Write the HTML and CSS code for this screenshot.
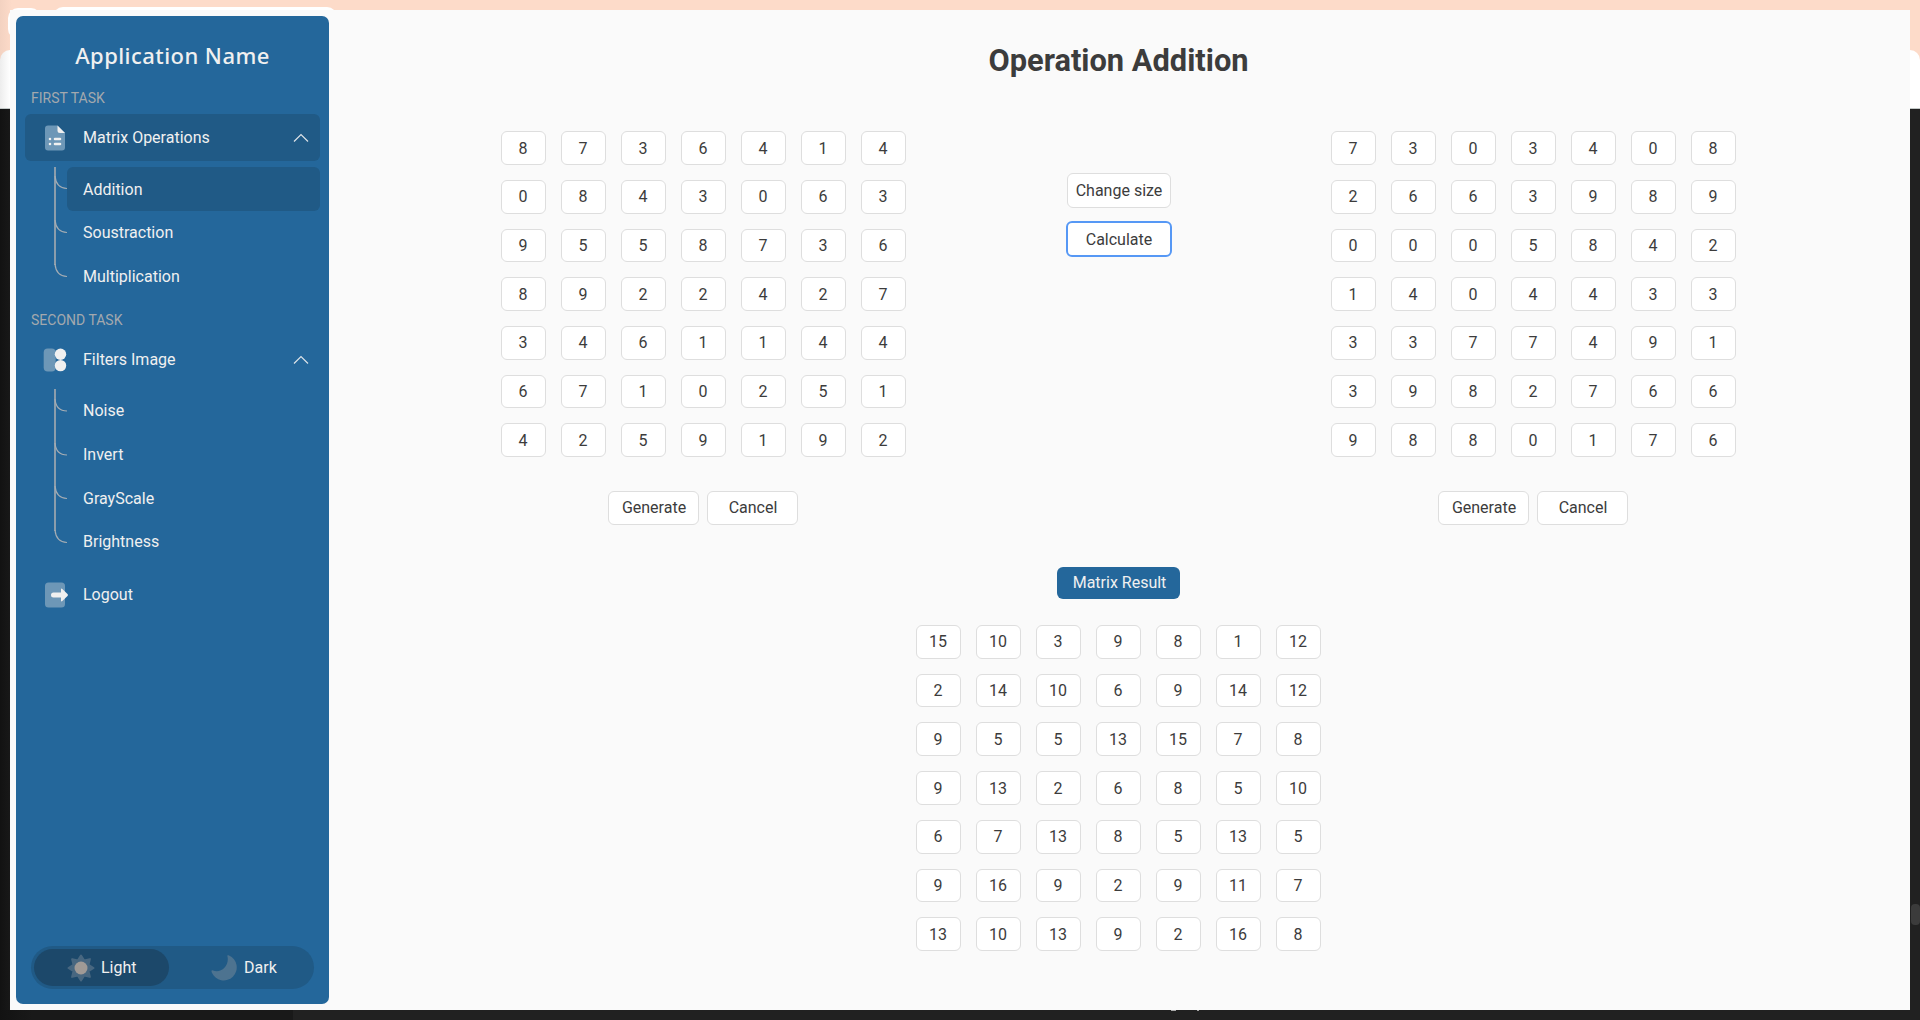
FILE: index.html
```html
<!DOCTYPE html>
<html lang="en">
<head>
<meta charset="utf-8">
<title>Operation Addition</title>
<link rel="stylesheet" href="styles.css">
</head>
<body>
<div class="desktop">
  <i class="piece page"></i>
  <i class="piece dark"></i>
  <i class="piece taskbar"></i>
  <i class="piece tab-icon"></i>
  <i class="piece tab"></i>
  <i class="piece scroll"></i>
  <i class="piece speck"></i>
  <i class="piece speck small"></i>
</div>
<div class="window">
  <aside class="sidebar">
    <div class="brand">Application Name</div>
    <div class="label">FIRST TASK</div>
    <div class="item active">
      <svg class="icon" viewBox="0 0 26 26"><path class="soft" d="M5 0.500h9.500l7.500 7.500v14.500a3 3 0 0 1-3 3H5a3 3 0 0 1-3-3v-19a3 3 0 0 1 3-3z"/><path class="solid" d="M14.500 .5l7.500 7.500h-5a2.500 2.500 0 0 1-2.500-2.500z"/><path class="dash" d="M7 14h.01M7 19h.01M12 14h5M12 19h5"/></svg>
      <span>Matrix Operations</span>
      <svg class="chevron" viewBox="0 0 16 10"><path d="M1 8.500l7-7 7 7"/></svg>
    </div>
    <div class="submenu">
      <svg class="tree" viewBox="0 0 13 132" height="132"><path class="trunk" d="M1 0v98"/><path d="M1 9Q2 21 13 21.500M1 53Q2 65 13 65.500M1 97Q2 109 13 109.500"/></svg>
      <div class="links"><a class="active">Addition</a><a>Soustraction</a><a>Multiplication</a></div>
    </div>
    <div class="label second">SECOND TASK</div>
    <div class="item">
      <svg class="icon" viewBox="0 0 26 26"><rect class="soft" x="0.7" y="1.500" width="12" height="23" rx="4"/><circle class="solid" cx="17.500" cy="7.200" r="5.700"/><circle class="solid" cx="17.500" cy="18.600" r="5.700"/></svg>
      <span>Filters Image</span>
      <svg class="chevron" viewBox="0 0 16 10"><path d="M1 8.500l7-7 7 7"/></svg>
    </div>
    <div class="submenu">
      <svg class="tree" viewBox="0 0 13 176" height="176"><path class="trunk" d="M1 0v142"/><path d="M1 10Q2 22 13 22M1 54Q2 66 13 66M1 97Q2 109 13 109.500M1 141Q2 153 13 153.500"/></svg>
      <div class="links"><a>Noise</a><a>Invert</a><a>GrayScale</a><a>Brightness</a></div>
    </div>
    <div class="item logout">
      <svg class="icon" viewBox="0 0 26 26"><rect class="soft" x="2" y="0.500" width="20" height="25" rx="3.500"/><path class="solid" d="M10.500 10.500H18V7.500q0-1.500 1.300-.5l5.200 5q1 1 0 2l-5.200 5q-1.300 1-1.300-.5v-3h-7.500a2.500 2.500 0 0 1 0-5z"/></svg>
      <span>Logout</span>
    </div>
    <div class="theme">
      <div class="mode on"><svg class="sun" viewBox="0 0 30 30"><path d="M15 2.500l3.200 5 5.700-1.400-1.400 5.700 5 3.200-5 3.200 1.400 5.700-5.700-1.400-3.200 5-3.200-5-5.700 1.400 1.400-5.700-5-3.200 5-3.200-1.400-5.700 5.700 1.400z"/><circle cx="15" cy="15" r="6.500"/></svg><span>Light</span></div>
      <div class="mode"><svg class="moon" viewBox="0 0 26 26"><path d="M16.500 1.500C15.500 .4 17 0 18 .5A13 13 0 1 1 .8 17.500C0 15.500 .8 14.800 2 15.500C10 18.500 18.500 11 16.500 1.500Z"/></svg><span>Dark</span></div>
    </div>
  </aside>
  <main class="main">
    <h1>Operation Addition</h1>
    <div class="operands">
      <section class="operand">
        <div class="matrix">
          <b>8</b><b>7</b><b>3</b><b>6</b><b>4</b><b>1</b><b>4</b>
          <b>0</b><b>8</b><b>4</b><b>3</b><b>0</b><b>6</b><b>3</b>
          <b>9</b><b>5</b><b>5</b><b>8</b><b>7</b><b>3</b><b>6</b>
          <b>8</b><b>9</b><b>2</b><b>2</b><b>4</b><b>2</b><b>7</b>
          <b>3</b><b>4</b><b>6</b><b>1</b><b>1</b><b>4</b><b>4</b>
          <b>6</b><b>7</b><b>1</b><b>0</b><b>2</b><b>5</b><b>1</b>
          <b>4</b><b>2</b><b>5</b><b>9</b><b>1</b><b>9</b><b>2</b>
        </div>
        <div class="buttons"><button>Generate</button><button>Cancel</button></div>
      </section>
      <section class="actions"><button>Change size</button><button class="focused">Calculate</button></section>
      <section class="operand">
        <div class="matrix">
          <b>7</b><b>3</b><b>0</b><b>3</b><b>4</b><b>0</b><b>8</b>
          <b>2</b><b>6</b><b>6</b><b>3</b><b>9</b><b>8</b><b>9</b>
          <b>0</b><b>0</b><b>0</b><b>5</b><b>8</b><b>4</b><b>2</b>
          <b>1</b><b>4</b><b>0</b><b>4</b><b>4</b><b>3</b><b>3</b>
          <b>3</b><b>3</b><b>7</b><b>7</b><b>4</b><b>9</b><b>1</b>
          <b>3</b><b>9</b><b>8</b><b>2</b><b>7</b><b>6</b><b>6</b>
          <b>9</b><b>8</b><b>8</b><b>0</b><b>1</b><b>7</b><b>6</b>
        </div>
        <div class="buttons"><button>Generate</button><button>Cancel</button></div>
      </section>
    </div>
    <section class="result">
      <div class="result-title">Matrix Result</div>
      <div class="matrix">
        <b>15</b><b>10</b><b>3</b><b>9</b><b>8</b><b>1</b><b>12</b>
        <b>2</b><b>14</b><b>10</b><b>6</b><b>9</b><b>14</b><b>12</b>
        <b>9</b><b>5</b><b>5</b><b>13</b><b>15</b><b>7</b><b>8</b>
        <b>9</b><b>13</b><b>2</b><b>6</b><b>8</b><b>5</b><b>10</b>
        <b>6</b><b>7</b><b>13</b><b>8</b><b>5</b><b>13</b><b>5</b>
        <b>9</b><b>16</b><b>9</b><b>2</b><b>9</b><b>11</b><b>7</b>
        <b>13</b><b>10</b><b>13</b><b>9</b><b>2</b><b>16</b><b>8</b>
      </div>
    </section>
  </main>
</div>
</body>
</html>
```
FILE: styles.css
```css
* { box-sizing: border-box; }
body {
  margin: 0;
  padding: 10px;
  height: 1020px;
  overflow: hidden;
  background: #fddbc9;
  font-family: Roboto, "Liberation Sans", sans-serif;
  font-size: 16px;
  color: #3c3c3c;
}

/* Desktop showing round the window */
.desktop { position: absolute; inset: 0; overflow: hidden; background: linear-gradient(90deg, #f3d2c1, #fddbc9 12px); }
.piece { position: absolute; }
.page { left: 0; right: 0; top: 50px; height: 59px; background: linear-gradient(90deg, #ededed, #fff 10px); border-radius: 10px 10px 0 0; border-bottom: 1px solid #c3c9c8; }
.dark { left: 0; right: 0; top: 109px; bottom: 0; background: linear-gradient(90deg, #121212, #181818 10px, #212121 11px); }
.taskbar { left: 0; top: 1010px; width: 293px; height: 10px; background: linear-gradient(90deg, #121212, #191919 32px); }
.tab-icon { left: 8px; top: 8px; width: 33px; height: 31px; border-radius: 10px; background: #fff; }
.tab { left: 53px; top: 7px; width: 284px; height: 30px; border-radius: 10px; background: #fff; }
.scroll { left: 1911px; top: 904px; width: 9px; height: 21px; border-radius: 4px; background: #3b3b3b; }
.speck { left: 1171px; top: 1010px; width: 5px; height: 1px; background: #aaa; }
.speck.small { left: 1197px; width: 2px; }

.window { position: relative; display: flex; height: 1000px; padding: 6px 0 6px 6px; background: #fafafa; }

.sidebar { display: flex; flex-direction: column; width: 313px; padding: 0 9px 15px; background: #24679b; border-radius: 7px; color: #f0f0f0; }
.brand { height: 71px; padding-top: 23px; font: 500 22px/32px "Noto Sans", sans-serif; letter-spacing: .45px; text-align: center; }
.label { height: 27px; padding: 2px 0 0 6px; font-size: 14px; line-height: 18px; color: #a3a9ae; }
.label.second { height: 37px; padding-top: 12px; }
.item { display: flex; align-items: center; flex: none; height: 47px; padding: 0 11px 0 18px; border-radius: 6px; line-height: 20px; }
.item.active, .links .active { background: #205a86; }
.icon { width: 26px; height: 26px; margin-right: 14px; }
.soft { fill: #6d97b7; }
.solid { fill: #f0f0f0; }
.dash { fill: none; stroke: #f0f0f0; stroke-width: 2.600; stroke-linecap: round; }
.chevron { width: 16px; height: 10px; margin-left: auto; fill: none; stroke: #dde3e8; stroke-width: 1.200; }
.submenu { display: flex; padding: 6px 0 0 29px; }
.tree { flex: none; width: 13px; fill: none; stroke: #a5adb4; stroke-width: 1.200; }
.trunk { stroke: #8b9dac; stroke-width: 2; }
.links { flex: 1; }
.links a { display: flex; align-items: center; height: 43.700px; padding-left: 16px; border-radius: 6px; }
.links .active { padding-top: 1px; }
.logout { margin-top: 6px; }
.theme { display: flex; width: 283px; height: 43px; margin: auto 0 0 6px; padding: 3px; background: #205a86; border-radius: 22px; }
.mode { display: flex; align-items: center; width: 135px; padding-left: 32px; border-radius: 19px; }
.mode.on { background: #1c486a; }
.mode + .mode { padding-left: 42px; }
.sun { width: 30px; height: 30px; margin-right: 5px; fill: #486780; stroke: #486780; stroke-width: 2; stroke-linejoin: round; }
.sun circle { fill: #a09a96; stroke: none; }
.moon { width: 26px; height: 26px; margin-right: 7px; fill: #4d7390; }

.main { flex: 1; display: flex; flex-direction: column; padding: 0 169px 0 167px; }
h1 { margin: 27px 0 0; font-size: 30.800px; line-height: 36px; font-weight: 700; text-align: center; }
.operands { display: grid; grid-template-columns: repeat(3, 415px); margin-top: 52.300px; }
.matrix { display: grid; grid-template-columns: repeat(7, 45px); grid-auto-rows: 33.700px; gap: 15px; justify-content: center; }
.matrix b, button { display: flex; align-items: center; justify-content: center; border: 1px solid #dedede; border-radius: 6px; background: #fff; font-weight: 400; }
.matrix b { padding: 0 1px 0 0; }
button { width: 91px; height: 34px; padding: 0 0 1px; font-family: inherit; font-size: 16px; color: #3c3c3c; }
.buttons { display: flex; justify-content: center; gap: 8px; margin: 34px 1px 0 0; }
.buttons button { padding-left: 1px; }
.actions { display: flex; flex-direction: column; align-items: center; gap: 13px; padding-top: 42px; }
.actions button { width: 104px; height: 35px; padding-left: 1px; }
.actions .focused { width: 106px; height: 36px; padding: 1px 0 0 1px; border: 2px solid #5698f5; }
.result { display: flex; flex-direction: column; align-items: center; margin-top: 42px; width: 1245px; }
.result-title { width: 123px; height: 32px; margin-bottom: 26px; padding-left: 2px; line-height: 32px; text-align: center; background: #24679b; border-radius: 6px; color: #f0f0f0; }
```
